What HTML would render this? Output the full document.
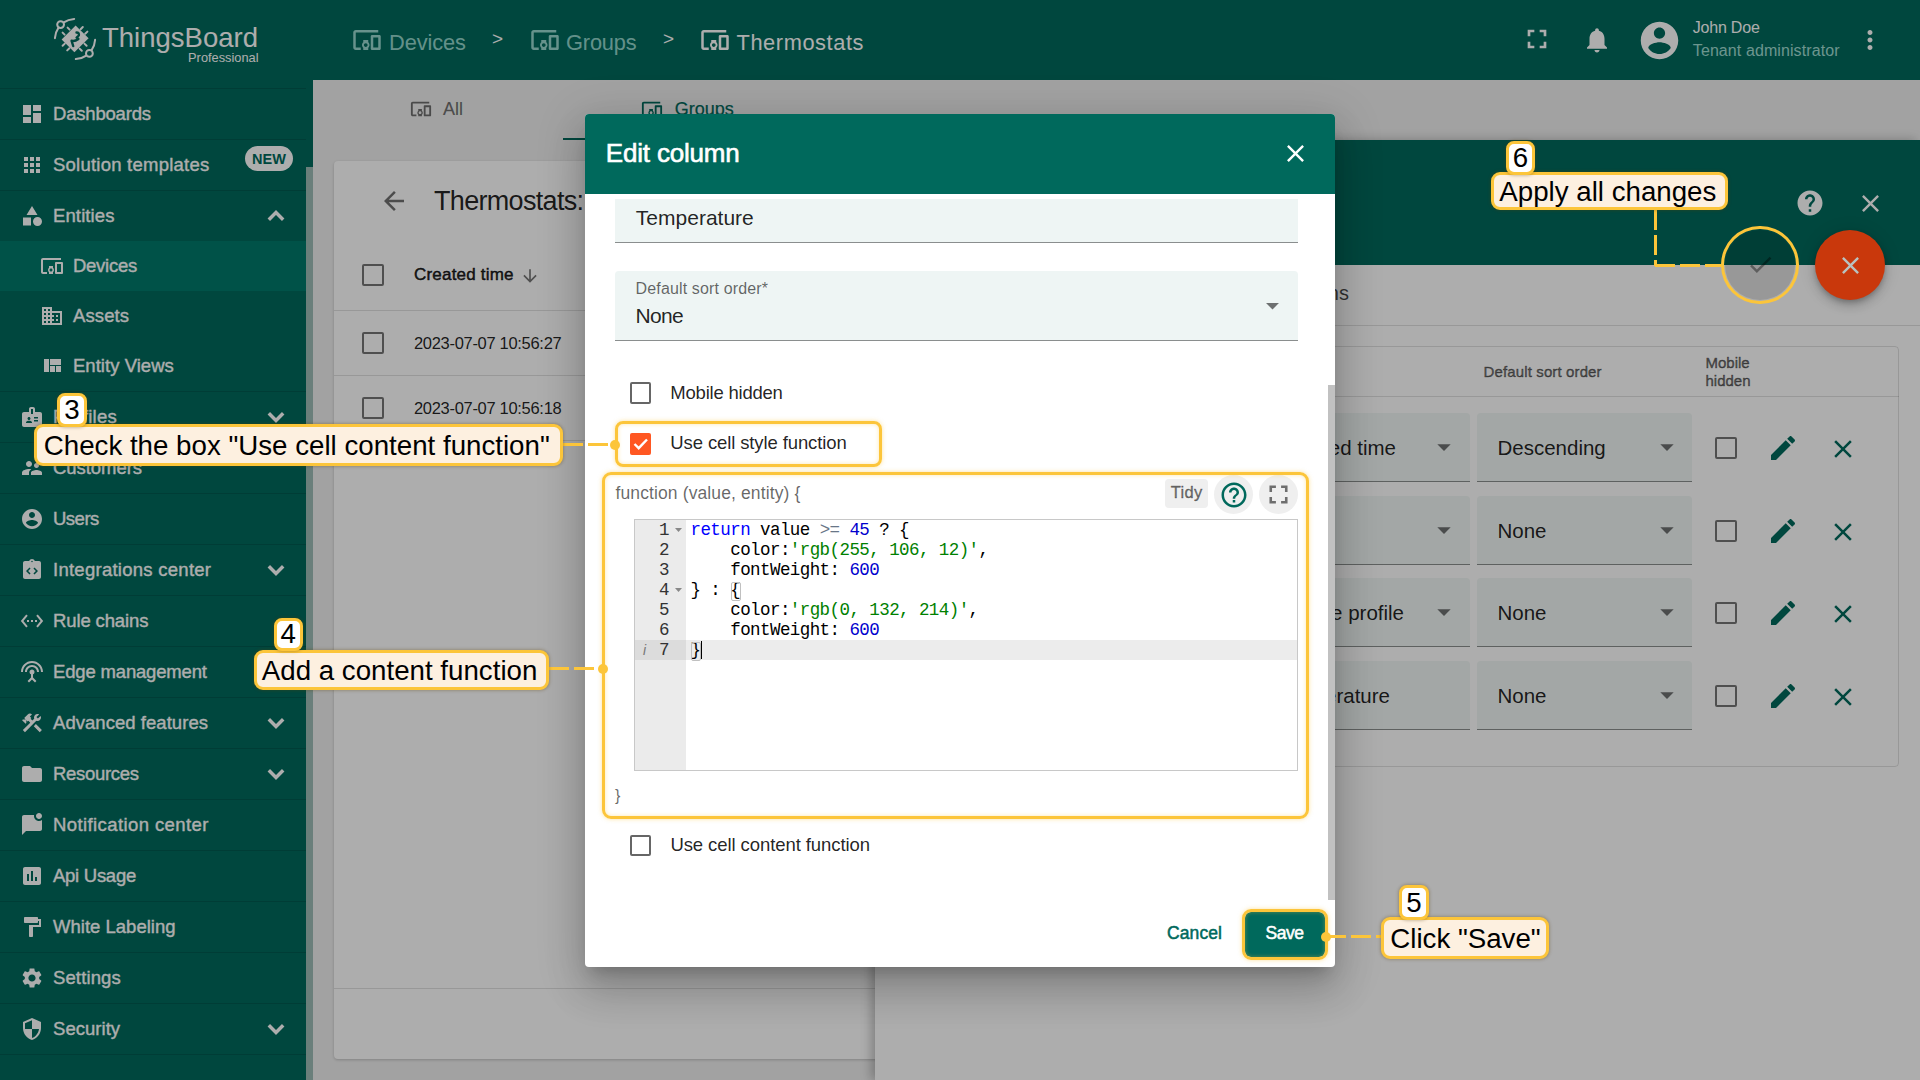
<!DOCTYPE html><html><head><meta charset="utf-8"><style>
*{margin:0;padding:0;box-sizing:border-box}
html,body{width:1920px;height:1080px;overflow:hidden;background:#efefef;position:relative}
body{font-family:"Liberation Sans", sans-serif}
.a{position:absolute}
.t{position:absolute;line-height:1;white-space:nowrap}
.s{font-family:"Liberation Sans", sans-serif}
.m{font-family:"Liberation Mono", monospace}
</style></head><body><div class="a" style="left:0px;top:0px;width:1920px;height:80px;background:#00695c"></div><svg class="a" style="left:50px;top:14px;" width="50" height="50" viewBox="0 0 50 50"><g fill="none" stroke="#fff" stroke-width="2" stroke-linecap="round">
<circle cx="10.6" cy="10.6" r="3.4"/>
<path d="M13.8 8.4 Q18 5.4 24.2 4.9"/><path d="M8.4 13.8 Q5.4 18 4.9 24.2"/>
<circle cx="39.4" cy="39.4" r="3.4"/>
<path d="M36.2 41.6 Q32 44.6 25.8 45.1"/><path d="M41.6 36.2 Q44.6 32 45.1 25.8"/>
<path d="M19.6 15.6l-2-2M14.6 20.6l-2-2M30.6 15.2l2.2-2.2M35.2 19.8l2.2-2.2M14.8 29.6l-2.2 2.2M19.4 34.2l-2.2 2.2M29.6 34.6l2.2 2.2M34.4 29.6l2.2 2.2"/>
</g>
<path fill="#fff" d="M25.6 11.6 L38.6 24.2 L24.4 38.2 L11.6 25.6 Z"/>
<path fill="none" stroke="#00695c" stroke-width="2.4" stroke-linejoin="round" stroke-linecap="round" d="M26.5 18.5 Q29.5 18.5 28.8 21.5 L26.6 23.6 L28.4 25 Q25 27.5 21.6 26.8 L23.2 32"/></svg><div class="t s" style="left:102.00px;top:24.22px;font-size:27.5px;color:#ffffff;letter-spacing:0.007px;">ThingsBoard</div><div class="t s" style="right:1661.50px;top:51.66px;font-size:12.8px;color:#ffffff;">Professional</div><svg class="a" style="left:352.30px;top:24.70px;" width="30" height="30" viewBox="0 0 24 24"><path fill="rgba(205,255,246,0.74)" d="M3 6h18V4H3c-1.1 0-2 .9-2 2v12c0 1.1.9 2 2 2h4v-2H3V6zm10 6H9v1.78c-.61.55-1 1.33-1 2.22s.39 1.67 1 2.22V20h4v-1.78c.61-.55 1-1.34 1-2.22s-.39-1.67-1-2.22V12zm-2 5.5c-.83 0-1.5-.67-1.5-1.5s.67-1.5 1.5-1.5 1.5.67 1.5 1.5-.67 1.5-1.5 1.5zM22 8h-6c-.5 0-1 .5-1 1v10c0 .5.5 1 1 1h6c.5 0 1-.5 1-1V9c0-.5-.5-1-1-1zm-1 10h-4v-8h4v8z"/></svg><div class="t s" style="left:389.00px;top:31.54px;font-size:21.8px;color:rgba(205,255,246,0.74);letter-spacing:-0.089px;">Devices</div><div class="t s" style="left:492.00px;top:28.91px;font-size:19px;color:#ffffff;">&gt;</div><svg class="a" style="left:529.50px;top:24.70px;" width="30" height="30" viewBox="0 0 24 24"><path fill="rgba(205,255,246,0.74)" d="M3 6h18V4H3c-1.1 0-2 .9-2 2v12c0 1.1.9 2 2 2h4v-2H3V6zm10 6H9v1.78c-.61.55-1 1.33-1 2.22s.39 1.67 1 2.22V20h4v-1.78c.61-.55 1-1.34 1-2.22s-.39-1.67-1-2.22V12zm-2 5.5c-.83 0-1.5-.67-1.5-1.5s.67-1.5 1.5-1.5 1.5.67 1.5 1.5-.67 1.5-1.5 1.5zM22 8h-6c-.5 0-1 .5-1 1v10c0 .5.5 1 1 1h6c.5 0 1-.5 1-1V9c0-.5-.5-1-1-1zm-1 10h-4v-8h4v8z"/></svg><div class="t s" style="left:566.00px;top:31.54px;font-size:21.8px;color:rgba(205,255,246,0.74);letter-spacing:-0.158px;">Groups</div><div class="t s" style="left:663.00px;top:28.91px;font-size:19px;color:#ffffff;">&gt;</div><svg class="a" style="left:699.60px;top:24.70px;" width="30" height="30" viewBox="0 0 24 24"><path fill="#ffffff" d="M3 6h18V4H3c-1.1 0-2 .9-2 2v12c0 1.1.9 2 2 2h4v-2H3V6zm10 6H9v1.78c-.61.55-1 1.33-1 2.22s.39 1.67 1 2.22V20h4v-1.78c.61-.55 1-1.34 1-2.22s-.39-1.67-1-2.22V12zm-2 5.5c-.83 0-1.5-.67-1.5-1.5s.67-1.5 1.5-1.5 1.5.67 1.5 1.5-.67 1.5-1.5 1.5zM22 8h-6c-.5 0-1 .5-1 1v10c0 .5.5 1 1 1h6c.5 0 1-.5 1-1V9c0-.5-.5-1-1-1zm-1 10h-4v-8h4v8z"/></svg><div class="t s" style="left:736.50px;top:31.54px;font-size:21.8px;color:#ffffff;letter-spacing:0.585px;">Thermostats</div><svg class="a" style="left:1521.30px;top:23.30px;" width="32" height="32" viewBox="0 0 24 24"><path fill="#ffffff" d="M7 14H5v5h5v-2H7v-3zm-2-4h2V7h3V5H5v5zm12 7h-3v2h5v-5h-2v3zM14 5v2h3v3h2V5h-5z"/></svg><svg class="a" style="left:1582.00px;top:24.90px;" width="30" height="30" viewBox="0 0 24 24"><path fill="#ffffff" d="M12 22c1.1 0 2-.9 2-2h-4c0 1.1.89 2 2 2zm6-6v-5c0-3.07-1.64-5.64-4.5-6.32V4c0-.83-.67-1.5-1.5-1.5s-1.5.67-1.5 1.5v.68C7.63 5.36 6 7.92 6 11v5l-2 2v1h16v-1l-2-2z"/></svg><svg class="a" style="left:1637.30px;top:18.00px;" width="45" height="45" viewBox="0 0 24 24"><path fill="#ffffff" d="M12 2C6.48 2 2 6.48 2 12s4.48 10 10 10 10-4.48 10-10S17.52 2 12 2zm0 3c1.66 0 3 1.34 3 3s-1.34 3-3 3-3-1.34-3-3 1.34-3 3-3zm0 14.2c-2.5 0-4.71-1.28-6-3.22.03-1.99 4-3.08 6-3.08 1.99 0 5.970 1.09 6 3.08-1.29 1.94-3.5 3.22-6 3.22z"/></svg><div class="t s" style="left:1692.80px;top:19.85px;font-size:16px;color:#ffffff;letter-spacing:-0.213px;">John Doe</div><div class="t s" style="left:1692.80px;top:43.45px;font-size:16px;color:#a0dcd2;letter-spacing:0.091px;">Tenant administrator</div><svg class="a" style="left:1855.00px;top:25.00px;" width="30" height="30" viewBox="0 0 24 24"><path fill="#ffffff" d="M12 8c1.1 0 2-.9 2-2s-.9-2-2-2-2 .9-2 2 .9 2 2 2zm0 2c-1.1 0-2 .9-2 2s.9 2 2 2 2-.9 2-2-.9-2-2-2zm0 6c-1.1 0-2 .9-2 2s.9 2 2 2 2-.9 2-2-.9-2-2-2z"/></svg><div class="a" style="left:0px;top:80px;width:313px;height:1000px;background:#00695c"></div><div class="a" style="left:0px;top:88px;width:306px;height:1px;background:rgba(0,0,0,0.13)"></div><div class="a" style="left:0px;top:139px;width:306px;height:1px;background:rgba(0,0,0,0.13)"></div><div class="a" style="left:0px;top:190px;width:306px;height:1px;background:rgba(0,0,0,0.13)"></div><div class="a" style="left:0px;top:391px;width:306px;height:1px;background:rgba(0,0,0,0.13)"></div><div class="a" style="left:0px;top:442px;width:306px;height:1px;background:rgba(0,0,0,0.13)"></div><div class="a" style="left:0px;top:493px;width:306px;height:1px;background:rgba(0,0,0,0.13)"></div><div class="a" style="left:0px;top:544px;width:306px;height:1px;background:rgba(0,0,0,0.13)"></div><div class="a" style="left:0px;top:595px;width:306px;height:1px;background:rgba(0,0,0,0.13)"></div><div class="a" style="left:0px;top:646px;width:306px;height:1px;background:rgba(0,0,0,0.13)"></div><div class="a" style="left:0px;top:697px;width:306px;height:1px;background:rgba(0,0,0,0.13)"></div><div class="a" style="left:0px;top:748px;width:306px;height:1px;background:rgba(0,0,0,0.13)"></div><div class="a" style="left:0px;top:799px;width:306px;height:1px;background:rgba(0,0,0,0.13)"></div><div class="a" style="left:0px;top:850px;width:306px;height:1px;background:rgba(0,0,0,0.13)"></div><div class="a" style="left:0px;top:901px;width:306px;height:1px;background:rgba(0,0,0,0.13)"></div><div class="a" style="left:0px;top:952px;width:306px;height:1px;background:rgba(0,0,0,0.13)"></div><div class="a" style="left:0px;top:1003px;width:306px;height:1px;background:rgba(0,0,0,0.13)"></div><div class="a" style="left:0px;top:1054px;width:306px;height:1px;background:rgba(0,0,0,0.13)"></div><div class="a" style="left:0px;top:241px;width:306px;height:50px;background:#00796b"></div><svg class="a" style="left:20.00px;top:102.00px;" width="24" height="24" viewBox="0 0 24 24"><path fill="#ffffff" d="M3 13h8V3H3v10zm0 8h8v-6H3v6zm10 0h8V11h-8v10zm0-18v6h8V3h-8z"/></svg><div class="t s" style="left:53.00px;top:105.34px;font-size:18.5px;color:#ffffff;letter-spacing:-0.195px;-webkit-text-stroke:0.35px #fff;">Dashboards</div><svg class="a" style="left:20.00px;top:153.00px;" width="24" height="24" viewBox="0 0 24 24"><path fill="#ffffff" d="M4 8h4V4H4v4zm6 12h4v-4h-4v4zm-6 0h4v-4H4v4zm0-6h4v-4H4v4zm6 0h4v-4h-4v4zm6-10v4h4V4h-4zm-6 4h4V4h-4v4zm6 6h4v-4h-4v4zm0 6h4v-4h-4v4z"/></svg><div class="t s" style="left:53.00px;top:156.34px;font-size:18.5px;color:#ffffff;letter-spacing:0.235px;-webkit-text-stroke:0.35px #fff;">Solution templates</div><div class="a" style="left:245px;top:145.5px;width:48px;height:25.0px;background:#fff;border-radius:13px"></div><div class="t s" style="left:252.00px;top:151.72px;font-size:14.5px;color:#00695c;font-weight:700;">NEW</div><svg class="a" style="left:20.00px;top:204.00px;" width="24" height="24" viewBox="0 0 24 24"><path fill="#ffffff" d="M12 2l-5.5 9h11z M13 17.5a4.5 4.5 0 1 0 9 0a4.5 4.5 0 1 0 -9 0z M3 13.5h8v8H3z"/></svg><div class="t s" style="left:53.00px;top:207.34px;font-size:18.5px;color:#ffffff;letter-spacing:0.119px;-webkit-text-stroke:0.35px #fff;">Entities</div><svg class="a" style="left:259.8px;top:200px;" width="32" height="32" viewBox="0 0 24 24"><path d="M6.6 14.8L12 9.4L17.4 14.8" fill="none" stroke="#fff" stroke-width="2.6"/></svg><svg class="a" style="left:40.00px;top:254.00px;" width="24" height="24" viewBox="0 0 24 24"><path fill="#ffffff" d="M3 6h18V4H3c-1.1 0-2 .9-2 2v12c0 1.1.9 2 2 2h4v-2H3V6zm10 6H9v1.78c-.61.55-1 1.33-1 2.22s.39 1.67 1 2.22V20h4v-1.78c.61-.55 1-1.34 1-2.22s-.39-1.67-1-2.22V12zm-2 5.5c-.83 0-1.5-.67-1.5-1.5s.67-1.5 1.5-1.5 1.5.67 1.5 1.5-.67 1.5-1.5 1.5zM22 8h-6c-.5 0-1 .5-1 1v10c0 .5.5 1 1 1h6c.5 0 1-.5 1-1V9c0-.5-.5-1-1-1zm-1 10h-4v-8h4v8z"/></svg><div class="t s" style="left:73.00px;top:257.34px;font-size:18.5px;color:#ffffff;letter-spacing:-0.267px;-webkit-text-stroke:0.35px #fff;">Devices</div><svg class="a" style="left:40.00px;top:304.00px;" width="24" height="24" viewBox="0 0 24 24"><path fill="#ffffff" d="M12 7V3H2v18h20V7H12zM6 19H4v-2h2v2zm0-4H4v-2h2v2zm0-4H4V9h2v2zm0-4H4V5h2v2zm4 12H8v-2h2v2zm0-4H8v-2h2v2zm0-4H8V9h2v2zm0-4H8V5h2v2zm10 12h-8v-2h2v-2h-2v-2h2v-2h-2V9h8v10zm-2-8h-2v2h2v-2zm0 4h-2v2h2v-2z"/></svg><div class="t s" style="left:73.00px;top:307.34px;font-size:18.5px;color:#ffffff;letter-spacing:0.116px;-webkit-text-stroke:0.35px #fff;">Assets</div><svg class="a" style="left:40.00px;top:354.00px;" width="24" height="24" viewBox="0 0 24 24"><path fill="#ffffff" d="M10 18h5v-6h-5v6zm-6 0h5V5H4v13zm12 0h5v-6h-5v6zM10 5v6h11V5H10z"/></svg><div class="t s" style="left:73.00px;top:357.34px;font-size:18.5px;color:#ffffff;letter-spacing:0.034px;-webkit-text-stroke:0.35px #fff;">Entity Views</div><svg class="a" style="left:20.00px;top:405.00px;" width="24" height="24" viewBox="0 0 24 24"><path fill="#ffffff" d="M20 7h-5V4c0-1.1-.9-2-2-2h-2c-1.1 0-2 .9-2 2v3H4c-1.1 0-2 .9-2 2v11c0 1.1.9 2 2 2h16c1.1 0 2-.9 2-2V9c0-1.1-.9-2-2-2zM9 12c.83 0 1.5.67 1.5 1.5S9.83 15 9 15s-1.5-.67-1.5-1.5S8.17 12 9 12zm3 6H6v-.43c0-.6.36-1.150.92-1.39.64-.28 1.34-.43 2.080-.43s1.44.15 2.08.43c.55.24.92.78.92 1.39V18zm1-9h-2V4h2v5zm5 7.5h-4V15h4v1.5zm0-3h-4V12h4v1.5z"/></svg><div class="t s" style="left:53.00px;top:408.34px;font-size:18.5px;color:#ffffff;letter-spacing:0.301px;-webkit-text-stroke:0.35px #fff;">Profiles</div><svg class="a" style="left:259.8px;top:401px;" width="32" height="32" viewBox="0 0 24 24"><path d="M6.6 9.2L12 14.6L17.4 9.2" fill="none" stroke="#fff" stroke-width="2.6"/></svg><svg class="a" style="left:20.00px;top:456.00px;" width="24" height="24" viewBox="0 0 24 24"><path fill="#ffffff" d="M16.5 12c1.38 0 2.49-1.12 2.49-2.5S17.88 7 16.5 7C15.12 7 14 8.12 14 9.5s1.12 2.5 2.5 2.5zM9 11c1.66 0 2.99-1.34 2.99-3S10.66 5 9 5C7.34 5 6 6.34 6 8s1.34 3 3 3zm7.5 3c-1.83 0-5.5.92-5.5 2.75V19h11v-2.250c0-1.83-3.67-2.75-5.5-2.75zM9 13c-2.33 0-7 1.17-7 3.5V19h7v-2.25c0-.85.33-2.34 2.37-3.47C10.5 13.1 9.66 13 9 13z"/></svg><div class="t s" style="left:53.00px;top:459.34px;font-size:18.5px;color:#ffffff;letter-spacing:-0.055px;-webkit-text-stroke:0.35px #fff;">Customers</div><svg class="a" style="left:20.00px;top:507.00px;" width="24" height="24" viewBox="0 0 24 24"><path fill="#ffffff" d="M12 2C6.48 2 2 6.48 2 12s4.48 10 10 10 10-4.48 10-10S17.52 2 12 2zm0 3c1.66 0 3 1.34 3 3s-1.34 3-3 3-3-1.34-3-3 1.34-3 3-3zm0 14.2c-2.5 0-4.71-1.28-6-3.22.03-1.99 4-3.08 6-3.08 1.99 0 5.970 1.09 6 3.08-1.29 1.94-3.5 3.22-6 3.22z"/></svg><div class="t s" style="left:53.00px;top:510.34px;font-size:18.5px;color:#ffffff;letter-spacing:-0.503px;-webkit-text-stroke:0.35px #fff;">Users</div><svg class="a" style="left:20.00px;top:558.00px;" width="24" height="24" viewBox="0 0 24 24"><path fill="#ffffff" d="M19 3h-4.18C14.4 1.84 13.3 1 12 1s-2.4.84-2.82 2H5c-1.1 0-2 .9-2 2v14c0 1.1.9 2 2 2h14c1.1 0 2-.9 2-2V5c0-1.1-.9-2-2-2zm-7-.25c.41 0 .75.34.75.75s-.34.75-.75.75-.75-.34-.75-.75.34-.75.75-.75zM9.5 16.5L6 13l3.5-3.5 1.06 1.06L8.12 13l2.44 2.440L9.5 16.5zm5 0l-1.06-1.06L15.88 13l-2.44-2.44L14.5 9.5 18 13l-3.5 3.5z"/></svg><div class="t s" style="left:53.00px;top:561.34px;font-size:18.5px;color:#ffffff;letter-spacing:0.265px;-webkit-text-stroke:0.35px #fff;">Integrations center</div><svg class="a" style="left:259.8px;top:554px;" width="32" height="32" viewBox="0 0 24 24"><path d="M6.6 9.2L12 14.6L17.4 9.2" fill="none" stroke="#fff" stroke-width="2.6"/></svg><svg class="a" style="left:20.00px;top:609.00px;" width="24" height="24" viewBox="0 0 24 24"><path fill="#ffffff" d="M7.77 6.76L6.23 5.48.82 12l5.41 6.52 1.54-1.28L3.42 12l4.35-5.24zM7 13h2v-2H7v2zm10-2h-2v2h2v-2zm-6 2h2v-2h-2v2zm6.77-7.52l-1.54 1.28L20.58 12l-4.35 5.24 1.54 1.28L23.18 12l-5.41-6.52z"/></svg><div class="t s" style="left:53.00px;top:612.34px;font-size:18.5px;color:#ffffff;letter-spacing:-0.127px;-webkit-text-stroke:0.35px #fff;">Rule chains</div><svg class="a" style="left:20.00px;top:660.00px;" width="24" height="24" viewBox="0 0 24 24"><path fill="#ffffff" d="M12 5c-3.87 0-7 3.13-7 7h2c0-2.76 2.24-5 5-5s5 2.24 5 5h2c0-3.87-3.13-7-7-7zm1 9.29c.88-.39 1.5-1.26 1.5-2.29 0-1.38-1.12-2.5-2.5-2.5S9.5 10.62 9.5 12c0 1.02.62 1.9 1.5 2.29v3.3L7.59 21 9 22.41l3-3 3 3L16.41 21 13 17.59v-3.3zM12 1C5.93 1 1 5.93 1 12h2c0-4.97 4.03-9 9-9s9 4.03 9 9h2c0-6.07-4.93-11-11-11z"/></svg><div class="t s" style="left:53.00px;top:663.34px;font-size:18.5px;color:#ffffff;letter-spacing:-0.167px;-webkit-text-stroke:0.35px #fff;">Edge management</div><svg class="a" style="left:20.00px;top:711.00px;" width="24" height="24" viewBox="0 0 24 24"><path fill="#ffffff" d="M13.78 15.17l2.12-2.12 6.01 6.01-2.12 2.12-6.01-6.01zM17.5 10c1.93 0 3.5-1.57 3.5-3.5 0-.58-.16-1.12-.41-1.6l-2.7 2.7-1.49-1.49 2.7-2.7c-.48-.25-1.02-.41-1.6-.41C15.57 3 14 4.57 14 6.5c0 .41.08.8.21 1.16l-1.85 1.85-1.78-1.78.71-.71-1.41-1.41L12 3.49c-1.17-1.17-3.07-1.17-4.24 0L4.22 7.03l1.41 1.41H2.81l-.71.71 3.54 3.54.71-.71V9.15l1.41 1.41.71-.71 1.78 1.78-7.41 7.41 2.12 2.12L16.34 9.79c.36.13.75.21 1.16.21z"/></svg><div class="t s" style="left:53.00px;top:714.34px;font-size:18.5px;color:#ffffff;letter-spacing:0.045px;-webkit-text-stroke:0.35px #fff;">Advanced features</div><svg class="a" style="left:259.8px;top:707px;" width="32" height="32" viewBox="0 0 24 24"><path d="M6.6 9.2L12 14.6L17.4 9.2" fill="none" stroke="#fff" stroke-width="2.6"/></svg><svg class="a" style="left:20.00px;top:762.00px;" width="24" height="24" viewBox="0 0 24 24"><path fill="#ffffff" d="M10 4H4c-1.1 0-1.99.9-1.99 2L2 18c0 1.1.9 2 2 2h16c1.1 0 2-.9 2-2V8c0-1.1-.9-2-2-2h-8l-2-2z"/></svg><div class="t s" style="left:53.00px;top:765.34px;font-size:18.5px;color:#ffffff;letter-spacing:-0.304px;-webkit-text-stroke:0.35px #fff;">Resources</div><svg class="a" style="left:259.8px;top:758px;" width="32" height="32" viewBox="0 0 24 24"><path d="M6.6 9.2L12 14.6L17.4 9.2" fill="none" stroke="#fff" stroke-width="2.6"/></svg><svg class="a" style="left:20.00px;top:813.00px;" width="24" height="24" viewBox="0 0 24 24"><path fill="#ffffff" d="M22 6.98V16c0 1.1-.9 2-2 2H6l-4 4V4c0-1.1.9-2 2-2h10.1c-.06.32-.1.66-.1 1 0 2.76 2.24 5 5 5 1.13 0 2.16-.39 3-1.02zM16 3c0 1.66 1.34 3 3 3s3-1.34 3-3-1.34-3-3-3-3 1.34-3 3z"/></svg><div class="t s" style="left:53.00px;top:816.34px;font-size:18.5px;color:#ffffff;letter-spacing:0.407px;-webkit-text-stroke:0.35px #fff;">Notification center</div><svg class="a" style="left:20.00px;top:864.00px;" width="24" height="24" viewBox="0 0 24 24"><path fill="#ffffff" d="M19 3H5c-1.1 0-2 .9-2 2v14c0 1.1.9 2 2 2h14c1.1 0 2-.9 2-2V5c0-1.1-.9-2-2-2zM9 17H7v-7h2v7zm4 0h-2V7h2v10zm4 0h-2v-4h2v4z"/></svg><div class="t s" style="left:53.00px;top:867.34px;font-size:18.5px;color:#ffffff;letter-spacing:-0.270px;-webkit-text-stroke:0.35px #fff;">Api Usage</div><svg class="a" style="left:20.00px;top:915.00px;" width="24" height="24" viewBox="0 0 24 24"><path fill="#ffffff" d="M18 4V3c0-.55-.45-1-1-1H5c-.55 0-1 .45-1 1v4c0 .55.45 1 1 1h12c.55 0 1-.45 1-1V6h1v4H9v11c0 .55.45 1 1 1h2c.55 0 1-.45 1-1v-9h8V4h-3z"/></svg><div class="t s" style="left:53.00px;top:918.34px;font-size:18.5px;color:#ffffff;letter-spacing:0.009px;-webkit-text-stroke:0.35px #fff;">White Labeling</div><svg class="a" style="left:20.00px;top:966.00px;" width="24" height="24" viewBox="0 0 24 24"><path fill="#ffffff" d="M19.14 12.94c.04-.3.06-.61.06-.94 0-.32-.02-.64-.07-.94l2.03-1.58c.18-.14.23-.41.12-.61l-1.92-3.32c-.12-.22-.37-.29-.59-.22l-2.39.96c-.5-.38-1.03-.7-1.62-.94l-.36-2.54c-.04-.24-.24-.41-.48-.41h-3.84c-.24 0-.43.17-.47.41l-.36 2.54c-.59.24-1.13.57-1.62.94l-2.39-.96c-.22-.08-.47 0-.59.22L2.74 8.87c-.12.21-.08.47.12.61l2.03 1.58c-.05.3-.09.63-.09.94s.02.64.07.94l-2.03 1.58c-.18.14-.23.41-.12.61l1.92 3.32c.12.22.37.29.59.22l2.39-.96c.5.38 1.03.7 1.62.94l.36 2.54c.05.24.24.41.48.41h3.84c.24 0 .44-.17.47-.41l.36-2.54c.59-.24 1.13-.56 1.62-.94l2.39.96c.22.08.47 0 .59-.22l1.92-3.32c.12-.22.07-.47-.12-.61l-2.01-1.58zM12 15.6c-1.98 0-3.6-1.62-3.6-3.6s1.62-3.6 3.6-3.6 3.6 1.62 3.6 3.6-1.62 3.6-3.6 3.6z"/></svg><div class="t s" style="left:53.00px;top:969.34px;font-size:18.5px;color:#ffffff;letter-spacing:0.122px;-webkit-text-stroke:0.35px #fff;">Settings</div><svg class="a" style="left:20.00px;top:1017.00px;" width="24" height="24" viewBox="0 0 24 24"><path fill="#ffffff" d="M12 1L3 5v6c0 5.55 3.84 10.74 9 12 5.16-1.26 9-6.45 9-12V5l-9-4zm0 10.99h7c-.53 4.12-3.28 7.79-7 8.94V12H5V6.3l7-3.11v8.8z"/></svg><div class="t s" style="left:53.00px;top:1020.34px;font-size:18.5px;color:#ffffff;letter-spacing:0.039px;-webkit-text-stroke:0.35px #fff;">Security</div><svg class="a" style="left:259.8px;top:1013px;" width="32" height="32" viewBox="0 0 24 24"><path d="M6.6 9.2L12 14.6L17.4 9.2" fill="none" stroke="#fff" stroke-width="2.6"/></svg><div class="a" style="left:306px;top:80px;width:7px;height:1000px;background:rgba(0,0,0,0.0)"></div><div class="a" style="left:306px;top:167px;width:7px;height:913px;background:#9dbbb6"></div><div class="a" style="left:313px;top:80px;width:1607px;height:1000px;background:#efefef"></div><svg class="a" style="left:410.00px;top:98.30px;" width="22" height="22" viewBox="0 0 24 24"><path fill="rgba(0,0,0,0.54)" d="M3 6h18V4H3c-1.1 0-2 .9-2 2v12c0 1.1.9 2 2 2h4v-2H3V6zm10 6H9v1.78c-.61.55-1 1.33-1 2.22s.39 1.67 1 2.22V20h4v-1.78c.61-.55 1-1.34 1-2.22s-.39-1.67-1-2.22V12zm-2 5.5c-.83 0-1.5-.67-1.5-1.5s.67-1.5 1.5-1.5 1.5.67 1.5 1.5-.67 1.5-1.5 1.5zM22 8h-6c-.5 0-1 .5-1 1v10c0 .5.5 1 1 1h6c.5 0 1-.5 1-1V9c0-.5-.5-1-1-1zm-1 10h-4v-8h4v8z"/></svg><div class="t s" style="left:443.00px;top:99.56px;font-size:18px;color:rgba(0,0,0,0.54);-webkit-text-stroke:0.2px rgba(0,0,0,0.54);">All</div><svg class="a" style="left:641.20px;top:98.30px;" width="22" height="22" viewBox="0 0 24 24"><path fill="#00695c" d="M3 6h18V4H3c-1.1 0-2 .9-2 2v12c0 1.1.9 2 2 2h4v-2H3V6zm10 6H9v1.78c-.61.55-1 1.33-1 2.22s.39 1.67 1 2.22V20h4v-1.78c.61-.55 1-1.34 1-2.22s-.39-1.67-1-2.22V12zm-2 5.5c-.83 0-1.5-.67-1.5-1.5s.67-1.5 1.5-1.5 1.5.67 1.5 1.5-.67 1.5-1.5 1.5zM22 8h-6c-.5 0-1 .5-1 1v10c0 .5.5 1 1 1h6c.5 0 1-.5 1-1V9c0-.5-.5-1-1-1zm-1 10h-4v-8h4v8z"/></svg><div class="t s" style="left:674.70px;top:99.56px;font-size:18px;color:#00695c;-webkit-text-stroke:0.2px #00695c;">Groups</div><div class="a" style="left:563px;top:138px;width:220px;height:2px;background:#00695c"></div><div class="a" style="left:334px;top:161px;width:1566px;height:898px;background:#fff;border-radius:4px;box-shadow:0 1px 3px rgba(0,0,0,0.2)"></div><svg class="a" style="left:379.00px;top:186.00px;" width="30" height="30" viewBox="0 0 24 24"><path fill="rgba(0,0,0,0.56)" d="M20 11H7.83l5.59-5.59L12 4l-8 8 8 8 1.41-1.41L7.83 13H20v-2z"/></svg><div class="t s" style="left:434.00px;top:187.54px;font-size:27px;color:rgba(0,0,0,0.87);letter-spacing:-0.685px;">Thermostats: Columns</div><div class="a" style="left:362px;top:264px;width:22px;height:22px;border:2px solid rgba(0,0,0,0.54);border-radius:2px"></div><div class="t s" style="left:414.00px;top:266.01px;font-size:17px;color:rgba(0,0,0,0.87);letter-spacing:0.198px;-webkit-text-stroke:0.5px rgba(0,0,0,0.87);">Created time</div><svg class="a" style="left:519.70px;top:266.30px;" width="20" height="20" viewBox="0 0 24 24"><path fill="rgba(0,0,0,0.54)" d="M20 12l-1.41-1.41L13 16.17V4h-2v12.17l-5.58-5.59L4 12l8 8 8-8z"/></svg><div class="a" style="left:334px;top:310px;width:1566px;height:1px;background:rgba(0,0,0,0.12)"></div><div class="a" style="left:334px;top:375px;width:1566px;height:1px;background:rgba(0,0,0,0.12)"></div><div class="a" style="left:334px;top:440px;width:1566px;height:1px;background:rgba(0,0,0,0.12)"></div><div class="a" style="left:362px;top:332px;width:22px;height:22px;border:2px solid rgba(0,0,0,0.54);border-radius:2px"></div><div class="t s" style="left:414.00px;top:335.03px;font-size:16.5px;color:rgba(0,0,0,0.87);letter-spacing:-0.307px;">2023-07-07 10:56:27</div><div class="a" style="left:362px;top:397px;width:22px;height:22px;border:2px solid rgba(0,0,0,0.54);border-radius:2px"></div><div class="t s" style="left:414.00px;top:400.03px;font-size:16.5px;color:rgba(0,0,0,0.87);letter-spacing:-0.307px;">2023-07-07 10:56:18</div><div class="a" style="left:334px;top:988px;width:1566px;height:1px;background:rgba(0,0,0,0.12)"></div><div class="a" style="left:875px;top:140px;width:1045px;height:940px;background:#fff;box-shadow:-4px 0 10px rgba(0,0,0,0.25)"></div><div class="a" style="left:875px;top:140px;width:1045px;height:125px;background:#00695c"></div><svg class="a" style="left:1794.50px;top:187.50px;" width="30" height="30" viewBox="0 0 24 24"><path fill="#ffffff" d="M12 2C6.48 2 2 6.48 2 12s4.48 10 10 10 10-4.48 10-10S17.52 2 12 2zm1 17h-2v-2h2v2zm2.07-7.75l-.9.92C13.45 12.9 13 13.5 13 15h-2v-.5c0-1.1.45-2.1 1.17-2.83l1.24-1.26c.37-.36.59-.86.59-1.41 0-1.1-.9-2-2-2s-2 .9-2 2H8c0-2.21 1.79-4 4-4s4 1.79 4 4c0 .88-.36 1.68-.93 2.25z"/></svg><svg class="a" style="left:1856.00px;top:188.50px;" width="29" height="29" viewBox="0 0 24 24"><path fill="#ffffff" d="M19 6.41L17.59 5 12 10.59 6.41 5 5 6.41 10.59 12 5 17.59 6.41 19 12 13.41 17.59 19 19 17.59 13.41 12z"/></svg><div class="t s" style="right:571.00px;top:283.07px;font-size:20px;color:rgba(0,0,0,0.72);">Columns</div><div class="a" style="left:875px;top:325px;width:1045px;height:1px;background:rgba(0,0,0,0.12)"></div><div class="a" style="left:895px;top:346px;width:1004px;height:421px;border:1px solid rgba(0,0,0,0.12);border-radius:4px"></div><div class="a" style="left:895px;top:396px;width:1004px;height:1px;background:rgba(0,0,0,0.12)"></div><div class="t s" style="left:1483.60px;top:364.30px;font-size:15px;color:rgba(0,0,0,0.54);letter-spacing:0.124px;-webkit-text-stroke:0.5px rgba(0,0,0,0.54);">Default sort order</div><div class="t s" style="left:1705.50px;top:355.30px;font-size:15px;color:rgba(0,0,0,0.54);-webkit-text-stroke:0.5px rgba(0,0,0,0.54);">Mobile</div><div class="t s" style="left:1705.50px;top:373.30px;font-size:15px;color:rgba(0,0,0,0.54);-webkit-text-stroke:0.5px rgba(0,0,0,0.54);">hidden</div><div class="a" style="left:1100px;top:413px;width:370px;height:69px;background:#f0f6f5;border-radius:4px 4px 0 0;border-bottom:1px solid rgba(0,0,0,0.42)"></div><div class="a" style="left:1477px;top:413px;width:215px;height:69px;background:#f0f6f5;border-radius:4px 4px 0 0;border-bottom:1px solid rgba(0,0,0,0.42)"></div><div class="t s" style="right:524.00px;top:437.64px;font-size:20.5px;color:rgba(0,0,0,0.87);">Created time</div><svg class="a" style="left:1428.00px;top:430.70px;" width="32" height="32" viewBox="0 0 24 24"><path fill="rgba(0,0,0,0.54)" d="M7 10l5 5 5-5z"/></svg><div class="t s" style="left:1497.50px;top:437.64px;font-size:20.5px;color:rgba(0,0,0,0.87);">Descending</div><svg class="a" style="left:1650.70px;top:430.70px;" width="32" height="32" viewBox="0 0 24 24"><path fill="rgba(0,0,0,0.54)" d="M7 10l5 5 5-5z"/></svg><div class="a" style="left:1715px;top:437px;width:22px;height:22px;border:2px solid rgba(0,0,0,0.54);border-radius:2px"></div><svg class="a" style="left:1767.00px;top:432.00px;" width="32" height="32" viewBox="0 0 24 24"><path fill="#00695c" d="M3 17.25V21h3.75L17.81 9.940l-3.75-3.75L3 17.25zM20.71 7.04c.39-.39.39-1.02 0-1.41l-2.34-2.34c-.39-.39-1.02-.39-1.41 0l-1.83 1.83 3.75 3.75 1.83-1.83z"/></svg><svg class="a" style="left:1827.75px;top:433.50px;" width="30" height="30" viewBox="0 0 24 24"><path fill="#00695c" d="M19 6.41L17.59 5 12 10.59 6.41 5 5 6.41 10.59 12 5 17.59 6.41 19 12 13.41 17.59 19 19 17.59 13.41 12z"/></svg><div class="a" style="left:1100px;top:496px;width:370px;height:69px;background:#f0f6f5;border-radius:4px 4px 0 0;border-bottom:1px solid rgba(0,0,0,0.42)"></div><div class="a" style="left:1477px;top:496px;width:215px;height:69px;background:#f0f6f5;border-radius:4px 4px 0 0;border-bottom:1px solid rgba(0,0,0,0.42)"></div><div class="t s" style="right:620.00px;top:520.64px;font-size:20.5px;color:rgba(0,0,0,0.87);">Name</div><svg class="a" style="left:1428.00px;top:513.70px;" width="32" height="32" viewBox="0 0 24 24"><path fill="rgba(0,0,0,0.54)" d="M7 10l5 5 5-5z"/></svg><div class="t s" style="left:1497.50px;top:520.64px;font-size:20.5px;color:rgba(0,0,0,0.87);">None</div><svg class="a" style="left:1650.70px;top:513.70px;" width="32" height="32" viewBox="0 0 24 24"><path fill="rgba(0,0,0,0.54)" d="M7 10l5 5 5-5z"/></svg><div class="a" style="left:1715px;top:520px;width:22px;height:22px;border:2px solid rgba(0,0,0,0.54);border-radius:2px"></div><svg class="a" style="left:1767.00px;top:515.00px;" width="32" height="32" viewBox="0 0 24 24"><path fill="#00695c" d="M3 17.25V21h3.75L17.81 9.940l-3.75-3.75L3 17.25zM20.71 7.04c.39-.39.39-1.02 0-1.41l-2.34-2.34c-.39-.39-1.02-.39-1.41 0l-1.83 1.83 3.75 3.75 1.83-1.83z"/></svg><svg class="a" style="left:1827.75px;top:516.50px;" width="30" height="30" viewBox="0 0 24 24"><path fill="#00695c" d="M19 6.41L17.59 5 12 10.59 6.41 5 5 6.41 10.59 12 5 17.59 6.41 19 12 13.41 17.59 19 19 17.59 13.41 12z"/></svg><div class="a" style="left:1100px;top:578px;width:370px;height:69px;background:#f0f6f5;border-radius:4px 4px 0 0;border-bottom:1px solid rgba(0,0,0,0.42)"></div><div class="a" style="left:1477px;top:578px;width:215px;height:69px;background:#f0f6f5;border-radius:4px 4px 0 0;border-bottom:1px solid rgba(0,0,0,0.42)"></div><div class="t s" style="right:516.00px;top:602.64px;font-size:20.5px;color:rgba(0,0,0,0.87);">Device profile</div><svg class="a" style="left:1428.00px;top:595.70px;" width="32" height="32" viewBox="0 0 24 24"><path fill="rgba(0,0,0,0.54)" d="M7 10l5 5 5-5z"/></svg><div class="t s" style="left:1497.50px;top:602.64px;font-size:20.5px;color:rgba(0,0,0,0.87);">None</div><svg class="a" style="left:1650.70px;top:595.70px;" width="32" height="32" viewBox="0 0 24 24"><path fill="rgba(0,0,0,0.54)" d="M7 10l5 5 5-5z"/></svg><div class="a" style="left:1715px;top:602px;width:22px;height:22px;border:2px solid rgba(0,0,0,0.54);border-radius:2px"></div><svg class="a" style="left:1767.00px;top:597.00px;" width="32" height="32" viewBox="0 0 24 24"><path fill="#00695c" d="M3 17.25V21h3.75L17.81 9.940l-3.75-3.75L3 17.25zM20.71 7.04c.39-.39.39-1.02 0-1.41l-2.34-2.34c-.39-.39-1.02-.39-1.41 0l-1.83 1.83 3.75 3.75 1.83-1.83z"/></svg><svg class="a" style="left:1827.75px;top:598.50px;" width="30" height="30" viewBox="0 0 24 24"><path fill="#00695c" d="M19 6.41L17.59 5 12 10.59 6.41 5 5 6.41 10.59 12 5 17.59 6.41 19 12 13.41 17.59 19 19 17.59 13.41 12z"/></svg><div class="a" style="left:1100px;top:661px;width:370px;height:69px;background:#f0f6f5;border-radius:4px 4px 0 0;border-bottom:1px solid rgba(0,0,0,0.42)"></div><div class="a" style="left:1477px;top:661px;width:215px;height:69px;background:#f0f6f5;border-radius:4px 4px 0 0;border-bottom:1px solid rgba(0,0,0,0.42)"></div><div class="t s" style="right:530.00px;top:685.64px;font-size:20.5px;color:rgba(0,0,0,0.87);">Temperature</div><div class="t s" style="left:1497.50px;top:685.64px;font-size:20.5px;color:rgba(0,0,0,0.87);">None</div><svg class="a" style="left:1650.70px;top:678.70px;" width="32" height="32" viewBox="0 0 24 24"><path fill="rgba(0,0,0,0.54)" d="M7 10l5 5 5-5z"/></svg><div class="a" style="left:1715px;top:685px;width:22px;height:22px;border:2px solid rgba(0,0,0,0.54);border-radius:2px"></div><svg class="a" style="left:1767.00px;top:680.00px;" width="32" height="32" viewBox="0 0 24 24"><path fill="#00695c" d="M3 17.25V21h3.75L17.81 9.940l-3.75-3.75L3 17.25zM20.71 7.04c.39-.39.39-1.02 0-1.41l-2.34-2.34c-.39-.39-1.02-.39-1.41 0l-1.83 1.83 3.75 3.75 1.83-1.83z"/></svg><svg class="a" style="left:1827.75px;top:681.50px;" width="30" height="30" viewBox="0 0 24 24"><path fill="#00695c" d="M19 6.41L17.59 5 12 10.59 6.41 5 5 6.41 10.59 12 5 17.59 6.41 19 12 13.41 17.59 19 19 17.59 13.41 12z"/></svg><div class="a" style="left:1725px;top:230px;width:70px;height:70px;background:rgba(0,0,0,0.12);border-radius:50%"></div><svg class="a" style="left:1745.50px;top:250.00px;" width="29" height="29" viewBox="0 0 24 24"><path fill="rgba(0,0,0,0.38)" d="M9 16.17L4.83 12l-1.42 1.41L9 19 21 7l-1.41-1.41z"/></svg><div class="a" style="left:0px;top:0px;width:1920px;height:1080px;background:rgba(0,0,0,0.32)"></div><div class="a" style="left:585px;top:114px;width:750px;height:853px;background:#fff;border-radius:4px;box-shadow:0 11px 15px -7px rgba(0,0,0,.2),0 24px 38px 3px rgba(0,0,0,.14),0 9px 46px 8px rgba(0,0,0,.12)"></div><div class="a" style="left:585px;top:114px;width:750px;height:80px;background:#00695c;border-radius:4px 4px 0 0"></div><div class="t s" style="left:605.80px;top:140.19px;font-size:26px;color:#ffffff;letter-spacing:-0.184px;-webkit-text-stroke:0.6px #fff;">Edit column</div><svg class="a" style="left:1280.60px;top:138.80px;" width="29" height="29" viewBox="0 0 24 24"><path fill="#ffffff" d="M19 6.41L17.59 5 12 10.59 6.41 5 5 6.41 10.59 12 5 17.59 6.41 19 12 13.41 17.59 19 19 17.59 13.41 12z"/></svg><div class="a" style="left:615px;top:199px;width:683px;height:44px;background:#eef5f4;border-bottom:1px solid rgba(0,0,0,0.42)"></div><div class="t s" style="left:635.80px;top:206.92px;font-size:21px;color:rgba(0,0,0,0.87);letter-spacing:0.011px;">Temperature</div><div class="a" style="left:615px;top:271px;width:683px;height:70px;background:#eef5f4;border-radius:4px 4px 0 0;border-bottom:1px solid rgba(0,0,0,0.42)"></div><div class="t s" style="left:635.60px;top:281.45px;font-size:16px;color:rgba(0,0,0,0.6);letter-spacing:0.142px;">Default sort order*</div><div class="t s" style="left:635.60px;top:304.92px;font-size:21px;color:rgba(0,0,0,0.87);letter-spacing:-0.735px;">None</div><svg class="a" style="left:1256.70px;top:290.30px;" width="31" height="31" viewBox="0 0 24 24"><path fill="rgba(0,0,0,0.54)" d="M7 10l5 5 5-5z"/></svg><div class="a" style="left:629.5px;top:382.2px;width:21.0px;height:22.0px;border:2px solid rgba(0,0,0,0.6);border-radius:2px"></div><div class="t s" style="left:670.30px;top:384.34px;font-size:18.5px;color:rgba(0,0,0,0.87);letter-spacing:-0.216px;">Mobile hidden</div><div class="a" style="left:629.5px;top:432.5px;width:21.0px;height:22.0px;background:#ff5722;border-radius:2px"></div><svg class="a" style="left:629.5px;top:432.5px;" width="21" height="21" viewBox="0 0 21 21"><path d="M4.5 11 L8.7 15.2 L17 6.5" fill="none" stroke="#fff" stroke-width="2.4"/></svg><div class="t s" style="left:670.30px;top:433.54px;font-size:18.5px;color:rgba(0,0,0,0.87);letter-spacing:-0.114px;">Use cell style function</div><div class="t s" style="left:615.50px;top:484.98px;font-size:17.5px;color:rgba(0,0,0,0.6);letter-spacing:0.116px;">function (value, entity) {</div><div class="a" style="left:1165px;top:479px;width:43px;height:29px;background:#efefef;border-radius:4px"></div><div class="t s" style="left:1170.80px;top:483.73px;font-size:16.5px;color:rgba(0,0,0,0.54);letter-spacing:0.313px;-webkit-text-stroke:0.4px rgba(0,0,0,0.54);">Tidy</div><div class="a" style="left:1213.5px;top:475px;width:39.0px;height:39px;background:#efefef;border-radius:50%"></div><svg class="a" style="left:1218.50px;top:479.60px;" width="30" height="30" viewBox="0 0 24 24"><path fill="#00695c" d="M11 18h2v-2h-2v2zm1-16C6.48 2 2 6.48 2 12s4.48 10 10 10 10-4.48 10-10S17.52 2 12 2zm0 18c-4.41 0-8-3.59-8-8s3.59-8 8-8 8 3.59 8 8-3.590 8-8 8zm0-14c-2.21 0-4 1.79-4 4h2c0-1.1.9-2 2-2s2 .9 2 2c0 2-3 1.75-3 5h2c0-2.25 3-2.5 3-5 0-2.21-1.79-4-4-4z"/></svg><div class="a" style="left:1258.5px;top:475px;width:39.0px;height:39px;background:#efefef;border-radius:50%"></div><svg class="a" style="left:1262.50px;top:478.80px;" width="31" height="31" viewBox="0 0 24 24"><path fill="rgba(0,0,0,0.54)" d="M7 14H5v5h5v-2H7v-3zm-2-4h2V7h3V5H5v5zm12 7h-3v2h5v-5h-2v3zM14 5v2h3v3h2V5h-5z"/></svg><div class="a" style="left:634px;top:519px;width:664px;height:252px;border:1px solid #c8c8c8;background:#fff"></div><div class="a" style="left:635px;top:520px;width:51px;height:250px;background:#ebebeb"></div><div class="a" style="left:635px;top:640px;width:51px;height:20px;background:#dcdcdc"></div><div class="a" style="left:686px;top:640px;width:611px;height:20px;background:#ececec"></div><div class="t m" style="right:1250.50px;top:522.39px;font-size:17.5px;color:#333;">1</div><svg class="a" style="left:675px;top:527.5px;" width="7" height="5" viewBox="0 0 7 5"><path d="M0 0H7L3.5 4z" fill="#888"/></svg><div class="t m" style="left:690.5px;top:522.39px;font-size:17.5px;letter-spacing:-0.57px;color:#000;white-space:pre"><span style="color:#0000ff">return</span> value <span style="color:#687687">&gt;=</span> <span style="color:#0000cd">45</span> ? {</div><div class="t m" style="right:1250.50px;top:542.39px;font-size:17.5px;color:#333;">2</div><div class="t m" style="left:690.5px;top:542.39px;font-size:17.5px;letter-spacing:-0.57px;color:#000;white-space:pre">    color:<span style="color:#008000">'rgb(255, 106, 12)'</span>,</div><div class="t m" style="right:1250.50px;top:562.39px;font-size:17.5px;color:#333;">3</div><div class="t m" style="left:690.5px;top:562.39px;font-size:17.5px;letter-spacing:-0.57px;color:#000;white-space:pre">    fontWeight: <span style="color:#0000cd">600</span></div><div class="t m" style="right:1250.50px;top:582.39px;font-size:17.5px;color:#333;">4</div><svg class="a" style="left:675px;top:587.5px;" width="7" height="5" viewBox="0 0 7 5"><path d="M0 0H7L3.5 4z" fill="#888"/></svg><div class="t m" style="left:690.5px;top:582.39px;font-size:17.5px;letter-spacing:-0.57px;color:#000;white-space:pre">} : {</div><div class="t m" style="right:1250.50px;top:602.39px;font-size:17.5px;color:#333;">5</div><div class="t m" style="left:690.5px;top:602.39px;font-size:17.5px;letter-spacing:-0.57px;color:#000;white-space:pre">    color:<span style="color:#008000">'rgb(0, 132, 214)'</span>,</div><div class="t m" style="right:1250.50px;top:622.39px;font-size:17.5px;color:#333;">6</div><div class="t m" style="left:690.5px;top:622.39px;font-size:17.5px;letter-spacing:-0.57px;color:#000;white-space:pre">    fontWeight: <span style="color:#0000cd">600</span></div><div class="t m" style="right:1250.50px;top:642.39px;font-size:17.5px;color:#333;">7</div><div class="t m" style="left:690.5px;top:642.39px;font-size:17.5px;letter-spacing:-0.57px;color:#000;white-space:pre">}</div><div class="t s" style="left:643.00px;top:643.35px;font-size:14px;color:#777;font-style:italic;font-family:"Liberation Serif",serif;">i</div><div class="a" style="left:730.5px;top:582px;width:10.0px;height:19px;border:1px solid #c0c0c0;border-radius:2px"></div><div class="a" style="left:690.5px;top:642px;width:10.0px;height:19px;border:1px solid #c0c0c0;border-radius:2px"></div><div class="a" style="left:701px;top:641px;width:1px;height:18px;background:#000"></div><div class="t s" style="left:615.00px;top:788.45px;font-size:16px;color:rgba(0,0,0,0.6);">}</div><div class="a" style="left:629.5px;top:834.5px;width:21.0px;height:21.5px;border:2px solid rgba(0,0,0,0.6);border-radius:2px"></div><div class="t s" style="left:670.40px;top:836.34px;font-size:18.5px;color:rgba(0,0,0,0.87);letter-spacing:-0.082px;">Use cell content function</div><div class="a" style="left:1328px;top:385px;width:7px;height:515px;background:#c1c1c1"></div><div class="t s" style="left:1167.00px;top:924.88px;font-size:17.5px;color:#00695c;letter-spacing:0.105px;-webkit-text-stroke:0.5px #00695c;">Cancel</div><div class="a" style="left:1245px;top:912px;width:80px;height:45px;background:#00695c;border-radius:6px"></div><div class="t s" style="left:1265.60px;top:924.88px;font-size:17.5px;color:#ffffff;letter-spacing:-0.530px;-webkit-text-stroke:0.5px #fff;">Save</div><div class="a" style="left:615px;top:421px;width:267px;height:46px;border:3px solid #fcc53a;border-radius:8px;box-shadow:0 0 4px rgba(252,197,58,0.5), inset 0 0 4px rgba(252,197,58,0.4)"></div><div class="a" style="left:602px;top:472px;width:707px;height:347px;border:3px solid #fcc53a;border-radius:9px;box-shadow:0 0 4px rgba(252,197,58,0.5), inset 0 0 4px rgba(252,197,58,0.4)"></div><div class="a" style="left:1242px;top:909px;width:86px;height:51px;border:3px solid #fcc53a;border-radius:9px;box-shadow:0 0 4px rgba(252,197,58,0.5), inset 0 0 4px rgba(252,197,58,0.4)"></div><div class="a" style="left:1721.4px;top:226px;width:77.19999999999982px;height:77.69999999999999px;border:3px solid #fcc53a;border-radius:50%"></div><div class="a" style="left:1815px;top:230px;width:70px;height:70px;background:#c9380c;border-radius:50%;box-shadow:0 3px 5px -1px rgba(0,0,0,.2),0 6px 10px 0 rgba(0,0,0,.14),0 1px 18px 0 rgba(0,0,0,.12)"></div><svg class="a" style="left:1835.50px;top:250.50px;" width="29" height="29" viewBox="0 0 24 24"><path fill="#b8c2c0" d="M19 6.41L17.59 5 12 10.59 6.41 5 5 6.41 10.59 12 5 17.59 6.41 19 12 13.41 17.59 19 19 17.59 13.41 12z"/></svg><div class="a" style="left:563px;top:443.0px;width:52px;height:3.0px;background:repeating-linear-gradient(90deg,#fcc53a 0 20px,transparent 20px 25px)"></div><div class="a" style="left:610px;top:439.5px;width:10px;height:10.0px;background:#fcc53a;border-radius:50%"></div><div class="a" style="left:34.4px;top:424px;width:528.6px;height:42px;background:#fdf0e0;border:3px solid #fcc53a;border-radius:9px;box-shadow:0 0 3px 1px rgba(90,60,0,0.28)"></div><div class="t s" style="left:43.75px;top:431.55px;font-size:27.7px;color:#000;">Check the box &quot;Use cell content function&quot;</div><div class="a" style="left:57.3px;top:392.8px;width:29.299999999999997px;height:33.89999999999998px;background:#fff;border:3px solid #fcc53a;border-radius:8px;box-shadow:0 0 3px 1px rgba(90,60,0,0.28)"></div><div class="t s" style="left:57.3px;width:29.299999999999997px;text-align:center;top:396.10px;font-size:27.7px;color:#000">3</div><div class="a" style="left:548.7px;top:667.1px;width:53.299999999999955px;height:3.0px;background:repeating-linear-gradient(90deg,#fcc53a 0 20px,transparent 20px 25px)"></div><div class="a" style="left:598px;top:663.6px;width:10px;height:10.0px;background:#fcc53a;border-radius:50%"></div><div class="a" style="left:253.5px;top:649.6px;width:295.20000000000005px;height:40.39999999999998px;background:#fdf0e0;border:3px solid #fcc53a;border-radius:9px;box-shadow:0 0 3px 1px rgba(90,60,0,0.28)"></div><div class="t s" style="left:261.80px;top:657.25px;font-size:27.7px;color:#000;">Add a content function</div><div class="a" style="left:273.6px;top:617.5px;width:29.399999999999977px;height:33.10000000000002px;background:#fff;border:3px solid #fcc53a;border-radius:8px;box-shadow:0 0 3px 1px rgba(90,60,0,0.28)"></div><div class="t s" style="left:273.6px;width:29.399999999999977px;text-align:center;top:620.40px;font-size:27.7px;color:#000">4</div><div class="a" style="left:1325.6px;top:935.0px;width:55.40000000000009px;height:3.0px;background:repeating-linear-gradient(90deg,#fcc53a 0 20px,transparent 20px 25px)"></div><div class="a" style="left:1320.6px;top:931.5px;width:10.0px;height:10.0px;background:#fcc53a;border-radius:50%"></div><div class="a" style="left:1381px;top:916.9px;width:167.75px;height:41.85000000000002px;background:#fdf0e0;border:3px solid #fcc53a;border-radius:9px;box-shadow:0 0 3px 1px rgba(90,60,0,0.28)"></div><div class="t s" style="left:1390.25px;top:925.30px;font-size:27.7px;color:#000;">Click &quot;Save&quot;</div><div class="a" style="left:1399px;top:885.25px;width:29.75px;height:35.0px;background:#fff;border:3px solid #fcc53a;border-radius:8px;box-shadow:0 0 3px 1px rgba(90,60,0,0.28)"></div><div class="t s" style="left:1399px;width:29.75px;text-align:center;top:889.10px;font-size:27.7px;color:#000">5</div><div class="a" style="left:1653.5px;top:210px;width:3.0px;height:56px;background:repeating-linear-gradient(180deg,#fcc53a 0 20px,transparent 20px 25px)"></div><div class="a" style="left:1655px;top:263.5px;width:67px;height:3.0px;background:repeating-linear-gradient(90deg,#fcc53a 0 20px,transparent 20px 25px)"></div><div class="a" style="left:1490.5px;top:172.2px;width:237.0999999999999px;height:38.30000000000001px;background:#fdf0e0;border:3px solid #fcc53a;border-radius:9px;box-shadow:0 0 3px 1px rgba(90,60,0,0.28)"></div><div class="t s" style="left:1499.30px;top:177.55px;font-size:27.7px;color:#000;">Apply all changes</div><div class="a" style="left:1506px;top:140.5px;width:29px;height:34.30000000000001px;background:#fff;border:3px solid #fcc53a;border-radius:8px;box-shadow:0 0 3px 1px rgba(90,60,0,0.28)"></div><div class="t s" style="left:1506px;width:29px;text-align:center;top:144.00px;font-size:27.7px;color:#000">6</div></body></html>
